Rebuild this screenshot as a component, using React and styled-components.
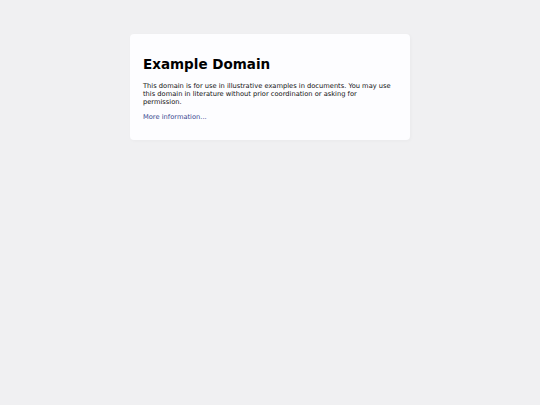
import React from "react";
import styled, { createGlobalStyle } from "styled-components";

const GlobalStyle = createGlobalStyle`
  html, body {
    margin: 0;
    padding: 0;
    background-color: #f0f0f2;
  }
  body {
    font-family: "DejaVu Sans", "Open Sans", Arial, sans-serif;
    min-height: 405px;
  }
`;

const Page = styled.div`
  padding-top: 34px;
`;

const Card = styled.div`
  box-sizing: border-box;
  width: 280px;
  margin: 0 auto;
  padding: 13px 13px 12px;
  background-color: #fdfdff;
  border-radius: 4px;
  box-shadow: 1px 1px 3px 1px rgba(0, 0, 0, 0.02);
`;

const Title = styled.h1`
  font-size: 13.5px;
  font-weight: bold;
  color: #000;
  margin: 10px 0 9px;
  line-height: 1.16;
`;

const Text = styled.p`
  font-size: 6.7px;
  line-height: 8px;
  color: #111;
  margin: 7px 0;
`;

const Link = styled.a`
  color: #38488f;
  text-decoration: none;
`;

export default function App() {
  return (
    <>
      <GlobalStyle />
      <Page>
        <Card>
          <Title>Example Domain</Title>
          <Text>
            This domain is for use in illustrative examples in documents. You
            may use this domain in literature without prior coordination or
            asking for permission.
          </Text>
          <Text>
            <Link href="#">More information...</Link>
          </Text>
        </Card>
      </Page>
    </>
  );
}
